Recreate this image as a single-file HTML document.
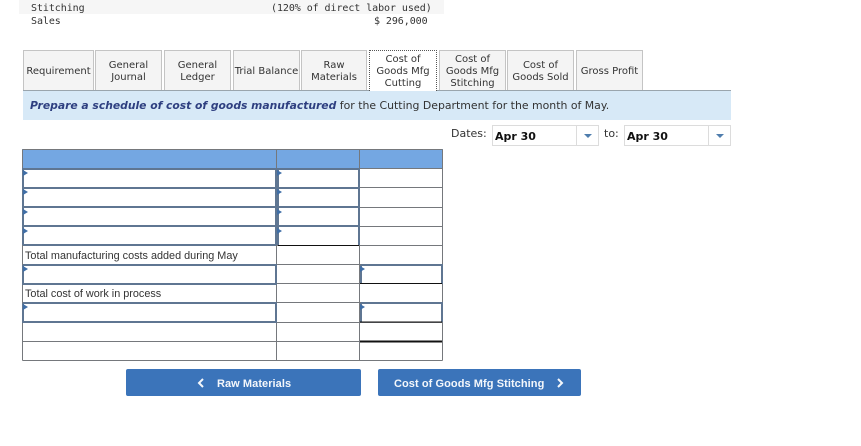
<!DOCTYPE html>
<html><head><meta charset="utf-8">
<style>
html,body{margin:0;padding:0;background:#fff;width:861px;height:446px;overflow:hidden}
.a{position:absolute}
.m{font:10px/13px "DejaVu Sans Mono","Liberation Mono",monospace;color:#333;white-space:pre;letter-spacing:-.07px}
.tab{position:absolute;top:50px;height:40px;box-sizing:border-box;padding-top:2px;background:#f4f4f4;border:1px solid #c4c4c4;border-bottom:none;display:flex;align-items:center;justify-content:center;text-align:center;font:10px/12px "DejaVu Sans",sans-serif;color:#333;white-space:nowrap}
.act{background:#fff;border:1px dotted #555;border-bottom:none;height:41px;z-index:2}
.v{font-family:"DejaVu Sans",sans-serif;color:#333;white-space:nowrap}
.sel{position:absolute;top:125px;height:21px;width:107px;box-sizing:border-box;border:1px solid #dcdcdc;background:#fff;font:bold 11px/21px "DejaVu Sans",sans-serif;color:#111;padding-left:2px}
.sel i{position:absolute;right:21px;top:0;bottom:0;width:1px;background:#dcdcdc}
.sel b{position:absolute;right:6px;top:8px;width:0;height:0;border-left:4px solid transparent;border-right:4px solid transparent;border-top:4px solid #4f7dad}
.btn{position:absolute;top:369px;height:27px;background:#3b74ba;border-radius:2px;color:#f4f7fb;font:bold 11px/30px "Liberation Sans",sans-serif;white-space:nowrap}
.t{position:absolute;font:10.85px/14px "Liberation Sans",sans-serif;color:#333;white-space:nowrap;left:25px}
</style></head><body>
<div class="a" style="left:19px;top:0;width:425px;height:14px;background:#f6f6f6"></div>
<div class="a m" style="left:31px;top:2px">Stitching</div>
<div class="a m" style="left:31px;top:15px">Sales</div>
<div class="a m" style="left:271px;top:2px">(120% of direct labor used)</div>
<div class="a m" style="left:374px;top:15px">$ 296,000</div>

<div class="tab" style="left:23px;width:71px">Requirement</div>
<div class="tab" style="left:95px;width:67px">General<br>Journal</div>
<div class="tab" style="left:164px;width:67px">General<br>Ledger</div>
<div class="tab" style="left:233px;width:67px">Trial Balance</div>
<div class="tab" style="left:301px;width:66px">Raw<br>Materials</div>
<div class="tab act" style="left:369px;width:68px">Cost of<br>Goods Mfg<br>Cutting</div>
<div class="tab" style="left:439px;width:67px">Cost of<br>Goods Mfg<br>Stitching</div>
<div class="tab" style="left:507px;width:67px">Cost of<br>Goods Sold</div>
<div class="tab" style="left:576px;width:67px">Gross Profit</div>
<div class="a" style="left:23px;top:90px;width:708px;height:1px;background:#9aa5ad"></div>
<div class="a" style="left:23px;top:91px;width:708px;height:29px;background:#d7e9f7"></div>
<div class="a v" style="left:30px;top:99px;font-size:10.9px;line-height:14px"><b style="color:#2e3f80;font-style:italic;font-size:10.75px">Prepare a schedule of cost of goods manufactured</b> for the Cutting Department for the month of May.</div>

<div class="a v" style="left:451px;top:127px;font-size:11px;line-height:14px">Dates:</div>
<div class="sel" style="left:492px">Apr 30<i></i><b></b></div>
<div class="a v" style="left:604px;top:127px;font-size:11px;line-height:14px">to:</div>
<div class="sel" style="left:624px">Apr 30<i></i><b></b></div>

<svg class="a" style="left:0;top:0" width="861" height="446" viewBox="0 0 861 446">
<rect x="22" y="149" width="421" height="20" fill="#74a7e2"/>
<g stroke="#75787c" stroke-width="1" fill="none" shape-rendering="crispEdges">
<path d="M22.5 149.5H442.5M22.5 168.5H442.5M22.5 187.5H442.5M22.5 207.5H442.5M22.5 226.5H442.5M22.5 245.5H442.5M22.5 264.5H442.5M22.5 283.5H442.5M22.5 302.5H442.5M22.5 322.5H442.5M22.5 341.5H442.5M22.5 360.5H442.5"/>
<path d="M22.5 149.5V360.5M276.5 149.5V360.5M359.5 149.5V360.5M442.5 149.5V360.5"/>
</g>
<g fill="none" stroke="#5f7692" stroke-width="2" shape-rendering="crispEdges">
<path d="M23 169H276M23 188H276M23 207H276M23 226H276M23 245H276"/>
<path d="M23 168V245M276 168V245"/>
<path d="M277 169H359M277 188H359M277 207H359M277 226H359M278 168V245M359 168V245"/>
<path d="M23 265H276V284H23V265M23 303H276V322H23V303"/>
<path d="M361 265H442V284M361 265V284M361 303H442V322M361 303V322"/>
</g>
<g stroke="#111" shape-rendering="crispEdges" fill="none">
<path d="M278 245.5H359" stroke-width="1"/>
<path d="M360 283.5H442" stroke-width="1"/>
<path d="M360 322H442" stroke-width="1"/>
<path d="M360 341.5H442" stroke-width="2"/>
</g>
<g fill="#3f6ea6">
<path d="M23 170l5 3-5 3zM23 189l5 3-5 3zM23 209l5 3-5 3zM23 228l5 3-5 3zM23 266l5 3-5 3zM23 304l5 3-5 3z"/>
<path d="M277 170l5 3-5 3zM277 189l5 3-5 3zM277 209l5 3-5 3zM277 228l5 3-5 3z"/>
<path d="M360 266l5 3-5 3zM360 304l5 3-5 3z"/>
</g>
</svg>
<div class="t" style="top:249px">Total manufacturing costs added during May</div>
<div class="t" style="top:287px">Total cost of work in process</div>

<div class="btn" style="left:126px;width:235px"><svg class="a" style="left:71px;top:9px" width="8" height="10" viewBox="0 0 8 10"><path d="M6 1L2 5l4 4" fill="none" stroke="#f4f7fb" stroke-width="2"/></svg><span class="a" style="left:91px;letter-spacing:.06px">Raw Materials</span></div>
<div class="btn" style="left:378px;width:203px"><span class="a" style="left:16px;letter-spacing:.07px">Cost of Goods Mfg Stitching</span><svg class="a" style="left:178px;top:9px" width="8" height="10" viewBox="0 0 8 10"><path d="M2 1l4 4-4 4" fill="none" stroke="#f4f7fb" stroke-width="2"/></svg></div>
</body></html>
